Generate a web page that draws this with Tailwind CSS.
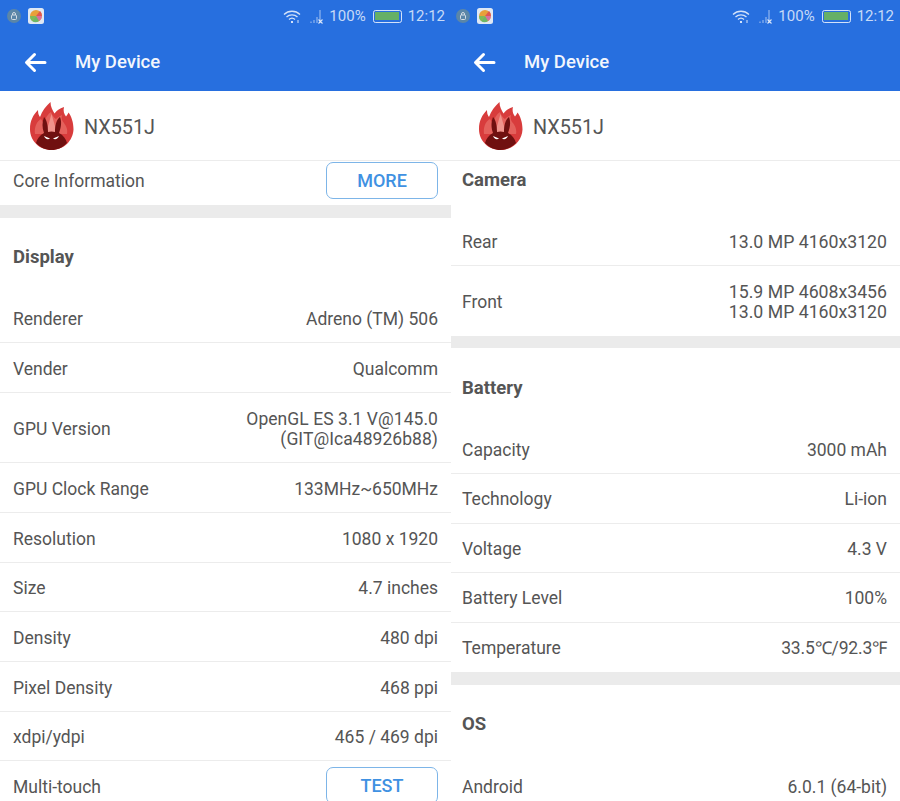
<!DOCTYPE html>
<html><head><meta charset="utf-8"><script src="https://cdn.jsdelivr.net/npm/@tailwindcss/browser@4"></script></head>
<body class="m-0 bg-white overflow-hidden">
<div class="w-[900px] h-[801px] overflow-hidden flex font-['Roboto',sans-serif] text-[17.5px] text-[#555555] leading-[20px]">

<!-- LEFT -->
<section class="w-[451px] h-[801px] overflow-hidden shrink-0 flex flex-col">
  <header class="h-[91px] bg-[#276fdf] text-white shrink-0 flex flex-col">
    <div class="h-[32px] flex items-center pl-[7px] pr-[6px] text-[15px] text-white/75">
      <svg width="14" height="14" viewBox="0 0 14 14"><circle cx="7" cy="7" r="7" fill="#5b86a8"/><rect x="4.5" y="6" width="5" height="4.5" rx="1" fill="none" stroke="#d5dde5"/><path d="M5.5 6V5a1.5 1.5 0 0 1 3 0v1" fill="none" stroke="#d5dde5"/></svg>
      <svg class="ml-[7px]" width="16" height="16" viewBox="0 0 16 16"><rect width="16" height="16" rx="2.5" fill="#dfe8f4"/><circle cx="8" cy="8" r="6" fill="#e8a13a"/><path d="M8 8 12 3a6 6 0 0 1 2 5z" fill="#e0574f"/><path d="M8 8h6a6 6 0 0 1-3 5z" fill="#d86fa0"/><path d="M8 8l3 5a6 6 0 0 1-7 0z" fill="#6cb868"/><path d="M8 8 4 13a6 6 0 0 1-2-5z" fill="#7dbb5a"/></svg>
      <div class="ml-auto flex items-center">
        <svg width="19" height="15" viewBox="0 0 19 15" fill="none" stroke="#ffffff" stroke-opacity=".8" stroke-width="1.3"><path d="M1 5.500a11.500 11.500 0 0 1 16 0"/><path d="M3.500 8a8 8 0 0 1 11 0"/><path d="M6 10.500a4.400 4.400 0 0 1 6 0"/><circle cx="9" cy="13" r="1.100" fill="#fff" stroke="none"/><path d="M15 11v3" stroke-width="1"/></svg>
        <svg class="ml-[8px]" width="15" height="16" viewBox="0 0 15 16" fill="none"><path d="M1 15v-1.500M4 15v-3M7 15v-6M10 15V2" stroke="#fff" stroke-opacity=".45" stroke-width="1.300"/><path d="M8.500 11.500l4 4M12.500 11.500l-4 4" stroke="#fff" stroke-opacity=".8" stroke-width="1.100"/></svg>
        <span class="ml-[4px]">100%</span>
        <div class="ml-[7px] w-[29px] h-[13px] rounded-[2.500px] border border-white/80 p-[1.500px]"><div class="h-full bg-[#66b066]"></div></div>
        <span class="ml-[6px]">12:12</span>
      </div>
    </div>
    <div class="flex-1 flex items-center pl-[24px] pt-[1px]">
      <svg width="23" height="21" viewBox="0 0 23 21" fill="none" stroke="#fff" stroke-width="3" stroke-linecap="round" stroke-linejoin="round"><path d="M21 10.500H3M10.500 2.500l-8 8 8 8"/></svg>
      <h1 class="ml-[28px] text-[18.500px] font-medium text-[#f2f6fd]">My Device</h1>
    </div>
  </header>
  <div class="h-[69px] shrink-0 flex items-center pl-[29px] pt-[1px]">
    <svg width="45" height="48" viewBox="0 0 45 48"><path d="M22.500 48C10 48 1 38.500 1 27c0-8 3-14 8-19 0 3 .5 5 2 7C13 9 17 4 21.500 0c0 5 2 8 4 11.500 2-3 5-5 9.500-6.500-1 4 0 7 2 9.500 1-1 2-3 2.500-4 3 4 5 10 5 17C44 38.500 35 48 22.500 48z" fill="#d83c3c"/><path d="M6 32c-1-7 2-13 6-15 1 2 2 3 3 4 1-5 4-9 7-11 1 3 3 6 5 7 2-2 4-3 6-4-1 3 0 6 2 8 2 3 4 6 3 11z" fill="#e4615c"/><path d="M22.500 12l5.500 19H17z" fill="#f0938c"/><path d="M15 15c3 3 4 9 4 15q3.500-1 7 0c0-6 1-12 5-15 2 5 1 11-1 16 4 2 7 6 8 10-5 5-10 7-15.500 7S12 46 7 41c1-4 4-8 8-10-2-5-2-11 0-16z" fill="#701010"/><path d="M15 34l6 2.500c-2 1.500-5 .5-6-2.500zM30 34l-6 2.500c2 1.500 5 .5 6-2.500z" fill="#fff"/></svg>
    <span class="ml-[10px] pt-[3px] text-[19.800px]">NX551J</span>
  </div>
  <div class="border-t border-[#ececec] h-[45px] shrink-0 flex items-start justify-between px-[13px] pt-[1px]">
    <span class="leading-[39px]">Core Information</span>
    <button class="w-[112px] h-[37px] rounded-[7px] border border-[#7db5e8] text-[#3f91e2] text-[18px] font-medium">MORE</button>
  </div>
  <div class="h-[13px] shrink-0 bg-[#ebebeb]"></div>
  <h2 class="h-[76px] shrink-0 px-[13px] pt-[1px] flex items-center text-[18.500px] font-bold">Display</h2>

  <div class="h-[49px] shrink-0 border-b border-[#ececec] px-[13px] pt-[2px] flex items-center justify-between"><span>Renderer</span><span>Adreno (TM) 506</span></div>
  <div class="h-[50px] shrink-0 border-b border-[#ececec] px-[13px] pt-[2px] flex items-center justify-between"><span>Vender</span><span>Qualcomm</span></div>
  <div class="h-[70px] shrink-0 border-b border-[#ececec] px-[13px] pt-[2px] flex items-center justify-between"><span>GPU Version</span><span class="text-right tracking-[.05px]">OpenGL ES 3.1 V@145.0<br>(GIT@Ica48926b88)</span></div>
  <div class="h-[50px] shrink-0 border-b border-[#ececec] px-[13px] pt-[2px] flex items-center justify-between"><span>GPU Clock Range</span><span>133MHz~650MHz</span></div>
  <div class="h-[50px] shrink-0 border-b border-[#ececec] px-[13px] pt-[2px] flex items-center justify-between"><span>Resolution</span><span>1080 x 1920</span></div>
  <div class="h-[49px] shrink-0 border-b border-[#ececec] px-[13px] pt-[2px] flex items-center justify-between"><span>Size</span><span>4.7 inches</span></div>
  <div class="h-[50px] shrink-0 border-b border-[#ececec] px-[13px] pt-[2px] flex items-center justify-between"><span>Density</span><span>480 dpi</span></div>
  <div class="h-[50px] shrink-0 border-b border-[#ececec] px-[13px] pt-[2px] flex items-center justify-between"><span>Pixel Density</span><span>468 ppi</span></div>
  <div class="h-[49px] shrink-0 border-b border-[#ececec] px-[13px] pt-[2px] flex items-center justify-between"><span>xdpi/ydpi</span><span>465 / 469 dpi</span></div>
  <div class="h-[50px] shrink-0 px-[13px] pt-[2px] flex items-center justify-between"><span>Multi-touch</span><button class="self-start mt-[4px] w-[112px] h-[37px] rounded-[7px] border border-[#7db5e8] text-[#3f91e2] text-[18px] font-medium">TEST</button></div>
</section>

<!-- RIGHT -->
<section class="w-[449px] h-[801px] overflow-hidden shrink-0 flex flex-col">
  <header class="h-[91px] bg-[#276fdf] text-white shrink-0 flex flex-col">
    <div class="h-[32px] flex items-center pl-[5px] pr-[6px] text-[15px] text-white/75">
      <svg width="14" height="14" viewBox="0 0 14 14"><circle cx="7" cy="7" r="7" fill="#5b86a8"/><rect x="4.5" y="6" width="5" height="4.5" rx="1" fill="none" stroke="#d5dde5"/><path d="M5.5 6V5a1.5 1.5 0 0 1 3 0v1" fill="none" stroke="#d5dde5"/></svg>
      <svg class="ml-[7px]" width="16" height="16" viewBox="0 0 16 16"><rect width="16" height="16" rx="2.5" fill="#dfe8f4"/><circle cx="8" cy="8" r="6" fill="#e8a13a"/><path d="M8 8 12 3a6 6 0 0 1 2 5z" fill="#e0574f"/><path d="M8 8h6a6 6 0 0 1-3 5z" fill="#d86fa0"/><path d="M8 8l3 5a6 6 0 0 1-7 0z" fill="#6cb868"/><path d="M8 8 4 13a6 6 0 0 1-2-5z" fill="#7dbb5a"/></svg>
      <div class="ml-auto flex items-center">
        <svg width="19" height="15" viewBox="0 0 19 15" fill="none" stroke="#ffffff" stroke-opacity=".8" stroke-width="1.3"><path d="M1 5.500a11.500 11.500 0 0 1 16 0"/><path d="M3.500 8a8 8 0 0 1 11 0"/><path d="M6 10.500a4.400 4.400 0 0 1 6 0"/><circle cx="9" cy="13" r="1.100" fill="#fff" stroke="none"/><path d="M15 11v3" stroke-width="1"/></svg>
        <svg class="ml-[8px]" width="15" height="16" viewBox="0 0 15 16" fill="none"><path d="M1 15v-1.500M4 15v-3M7 15v-6M10 15V2" stroke="#fff" stroke-opacity=".45" stroke-width="1.300"/><path d="M8.500 11.500l4 4M12.500 11.500l-4 4" stroke="#fff" stroke-opacity=".8" stroke-width="1.100"/></svg>
        <span class="ml-[4px]">100%</span>
        <div class="ml-[7px] w-[29px] h-[13px] rounded-[2.500px] border border-white/80 p-[1.500px]"><div class="h-full bg-[#66b066]"></div></div>
        <span class="ml-[6px]">12:12</span>
      </div>
    </div>
    <div class="flex-1 flex items-center pl-[22px] pt-[1px]">
      <svg width="23" height="21" viewBox="0 0 23 21" fill="none" stroke="#fff" stroke-width="3" stroke-linecap="round" stroke-linejoin="round"><path d="M21 10.500H3M10.500 2.500l-8 8 8 8"/></svg>
      <h1 class="ml-[28px] text-[18.500px] font-medium text-[#f2f6fd]">My Device</h1>
    </div>
  </header>
  <div class="h-[69px] shrink-0 flex items-center pl-[27px] pt-[1px]">
    <svg width="45" height="48" viewBox="0 0 45 48"><path d="M22.500 48C10 48 1 38.500 1 27c0-8 3-14 8-19 0 3 .5 5 2 7C13 9 17 4 21.500 0c0 5 2 8 4 11.500 2-3 5-5 9.500-6.500-1 4 0 7 2 9.500 1-1 2-3 2.500-4 3 4 5 10 5 17C44 38.500 35 48 22.500 48z" fill="#d83c3c"/><path d="M6 32c-1-7 2-13 6-15 1 2 2 3 3 4 1-5 4-9 7-11 1 3 3 6 5 7 2-2 4-3 6-4-1 3 0 6 2 8 2 3 4 6 3 11z" fill="#e4615c"/><path d="M22.500 12l5.500 19H17z" fill="#f0938c"/><path d="M15 15c3 3 4 9 4 15q3.500-1 7 0c0-6 1-12 5-15 2 5 1 11-1 16 4 2 7 6 8 10-5 5-10 7-15.500 7S12 46 7 41c1-4 4-8 8-10-2-5-2-11 0-16z" fill="#701010"/><path d="M15 34l6 2.500c-2 1.500-5 .5-6-2.500zM30 34l-6 2.500c2 1.500 5 .5 6-2.500z" fill="#fff"/></svg>
    <span class="ml-[10px] pt-[3px] text-[19.800px]">NX551J</span>
  </div>
  <h2 class="border-t border-[#ececec] h-[39px] shrink-0 pl-[11px] pr-[13px] flex items-center text-[18.500px] font-bold">Camera</h2>

  <div class="h-[67px] shrink-0 border-b border-[#ececec] pl-[11px] pr-[13px] pt-[20px] flex items-center justify-between"><span>Rear</span><span class="text-[17.700px]">13.0 MP 4160x3120</span></div>
  <div class="h-[70px] shrink-0 pl-[11px] pr-[13px] pt-[2px] flex items-center justify-between"><span>Front</span><span class="text-right text-[17.700px]">15.9 MP 4608x3456<br>13.0 MP 4160x3120</span></div>
  <div class="h-[12px] shrink-0 bg-[#ebebeb]"></div>
  <h2 class="h-[77px] shrink-0 pl-[11px] pr-[13px] pt-[3px] flex items-center text-[18.500px] font-bold">Battery</h2>
  <div class="h-[49px] shrink-0 border-b border-[#ececec] pl-[11px] pr-[13px] pt-[1px] flex items-center justify-between"><span>Capacity</span><span>3000 mAh</span></div>
  <div class="h-[50px] shrink-0 border-b border-[#ececec] pl-[11px] pr-[13px] pt-[1px] flex items-center justify-between"><span>Technology</span><span>Li-ion</span></div>
  <div class="h-[49px] shrink-0 border-b border-[#ececec] pl-[11px] pr-[13px] pt-[1px] flex items-center justify-between"><span>Voltage</span><span>4.3 V</span></div>
  <div class="h-[50px] shrink-0 border-b border-[#ececec] pl-[11px] pr-[13px] pt-[1px] flex items-center justify-between"><span>Battery Level</span><span>100%</span></div>
  <div class="h-[49px] shrink-0 pl-[11px] pr-[13px] pt-[1px] flex items-center justify-between"><span>Temperature</span><span class="tracking-[-.15px]">33.5℃/92.3℉</span></div>
  <div class="h-[13px] shrink-0 bg-[#ebebeb]"></div>
  <h2 class="h-[76px] shrink-0 pl-[11px] pr-[13px] pt-[2px] flex items-center text-[18.500px] font-bold">OS</h2>
  <div class="h-[50px] shrink-0 pl-[11px] pr-[13px] pt-[2px] flex items-center justify-between"><span>Android</span><span>6.0.1 (64-bit)</span></div>
</section>
</div>
</body></html>
